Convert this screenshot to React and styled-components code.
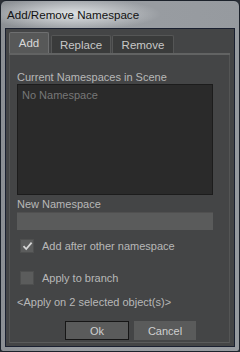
import React from "react";
import styled, { createGlobalStyle } from "styled-components";

const Global = createGlobalStyle`
  *, *::before, *::after { box-sizing: border-box; }
  html, body { margin: 0; padding: 0; background: #2b2f36; }
  body { font-family: "Liberation Sans", Arial, sans-serif; }
`;

const Window = styled.div`
  width: 240px;
  height: 352px;
  border: 1px solid #1c222b;
  border-radius: 6px 6px 3px 3px;
  background: linear-gradient(90deg, #8b8f94 0%, #9a9ea3 30%, #969a9f 100%);
  display: flex;
  flex-direction: column;
  overflow: hidden;
`;

const TitleBar = styled.div`
  height: 27px;
  flex: none;
  display: flex;
  align-items: center;
  padding-left: 6px;
  background: radial-gradient(ellipse 90px 16px at 70px 13px, rgba(235,238,240,0.85), rgba(235,238,240,0) 100%);
`;

const Title = styled.span`
  font-size: 11.6px;
  color: #111;
`;

const Body = styled.div`
  flex: 1;
  margin: 0 4px 4px 4px;
  background: #444546;
  border: 1px solid #1a2030;
  display: flex;
  flex-direction: column;
  padding: 3px 4px 3px 3px;
`;

const TabRow = styled.div`
  display: flex;
  align-items: flex-end;
  height: 23px;
  flex: none;
  border-bottom: 2px solid #626363;
`;

const Tab = styled.div`
  width: ${p => p.$w}px;
  height: ${p => (p.$active ? 21 : 18)}px;
  background: ${p => (p.$active ? "#575858" : "#3a3b3b")};
  border: 1px solid ${p => (p.$active ? "#6e6f70" : "#555656")};
  border-bottom: none;
  border-radius: 2px 2px 0 0;
  display: flex;
  align-items: center;
  justify-content: center;
  font-size: 11.5px;
  color: ${p => (p.$active ? "#d8d8d8" : "#c8c8c8")};
  margin-left: ${p => p.$ml || 0}px;
`;

const Pane = styled.div`
  flex: 1;
  border-left: 1px solid #545555;
  border-right: 1px solid #545555;
  border-bottom: 1px solid #5a5b5b;
  padding: 16px 16px 0 7px;
  display: flex;
  flex-direction: column;
`;

const Label = styled.div`
  font-size: 11px;
  color: #b8b8b8;
  line-height: 13px;
  height: 13px;
  margin-top: ${p => p.$mt || 0}px;
`;

const ListBox = styled.div`
  height: 111px;
  background: #2a2a2a;
  border: 1px solid #1c1c1c;
  padding: 4px 4px;
  font-size: 11px;
  color: #777;
  line-height: 13px;
`;

const Input = styled.div`
  height: 18px;
  margin-top: 1px;
  background: #5a5b5b;
  border-top: 1px solid #505050;
`;

const CheckRow = styled.div`
  display: flex;
  align-items: center;
  gap: 8px;
  padding-left: 3px;
  height: 14px;
  margin-top: ${p => p.$mt || 0}px;
`;

const Box = styled.div`
  width: 14px;
  height: 14px;
  background: #5b5c5c;
  border: 1px solid #4e4f4f;
  display: flex;
  align-items: center;
  justify-content: center;
`;

const CheckText = styled.span`
  font-size: 11px;
  color: #b8b8b8;
`;

const Info = styled.div`
  font-size: 11px;
  color: #b8b8b8;
  line-height: 13px;
  margin-top: 11px;
`;

const ButtonRow = styled.div`
  display: flex;
  gap: 5px;
  padding-left: 48px;
  margin-top: 12px;
`;

const Button = styled.div`
  width: ${p => p.$w}px;
  height: 19px;
  background: #5a5b5b;
  border: 1px solid ${p => (p.$focus ? "#161616" : "#5a5b5b")};
  display: flex;
  align-items: center;
  justify-content: center;
  font-size: 11px;
  color: #cfcfcf;
`;

export default function App() {
  return (
    <>
      <Global />
      <Window>
        <TitleBar>
          <Title>Add/Remove Namespace</Title>
        </TitleBar>
        <Body>
          <TabRow>
            <Tab $active $w={40}>Add</Tab>
            <Tab $w={60} $ml={2}>Replace</Tab>
            <Tab $w={62} $ml={1}>Remove</Tab>
          </TabRow>
          <Pane>
            <Label>Current Namespaces in Scene</Label>
            <ListBox>No Namespace</ListBox>
            <Label $mt={3}>New Namespace</Label>
            <Input />
            <CheckRow $mt={9}>
              <Box>
                <svg width="11" height="10" viewBox="0 0 11 10">
                  <path d="M1.5 5.2 L4.2 8 L9.6 1.6" fill="none" stroke="#d6d6d6" strokeWidth="1.8" />
                </svg>
              </Box>
              <CheckText>Add after other namespace</CheckText>
            </CheckRow>
            <CheckRow $mt={18}>
              <Box />
              <CheckText>Apply to branch</CheckText>
            </CheckRow>
            <Info>&lt;Apply on 2 selected object(s)&gt;</Info>
            <ButtonRow>
              <Button $focus $w={64}>Ok</Button>
              <Button $w={62}>Cancel</Button>
            </ButtonRow>
          </Pane>
        </Body>
      </Window>
    </>
  );
}
